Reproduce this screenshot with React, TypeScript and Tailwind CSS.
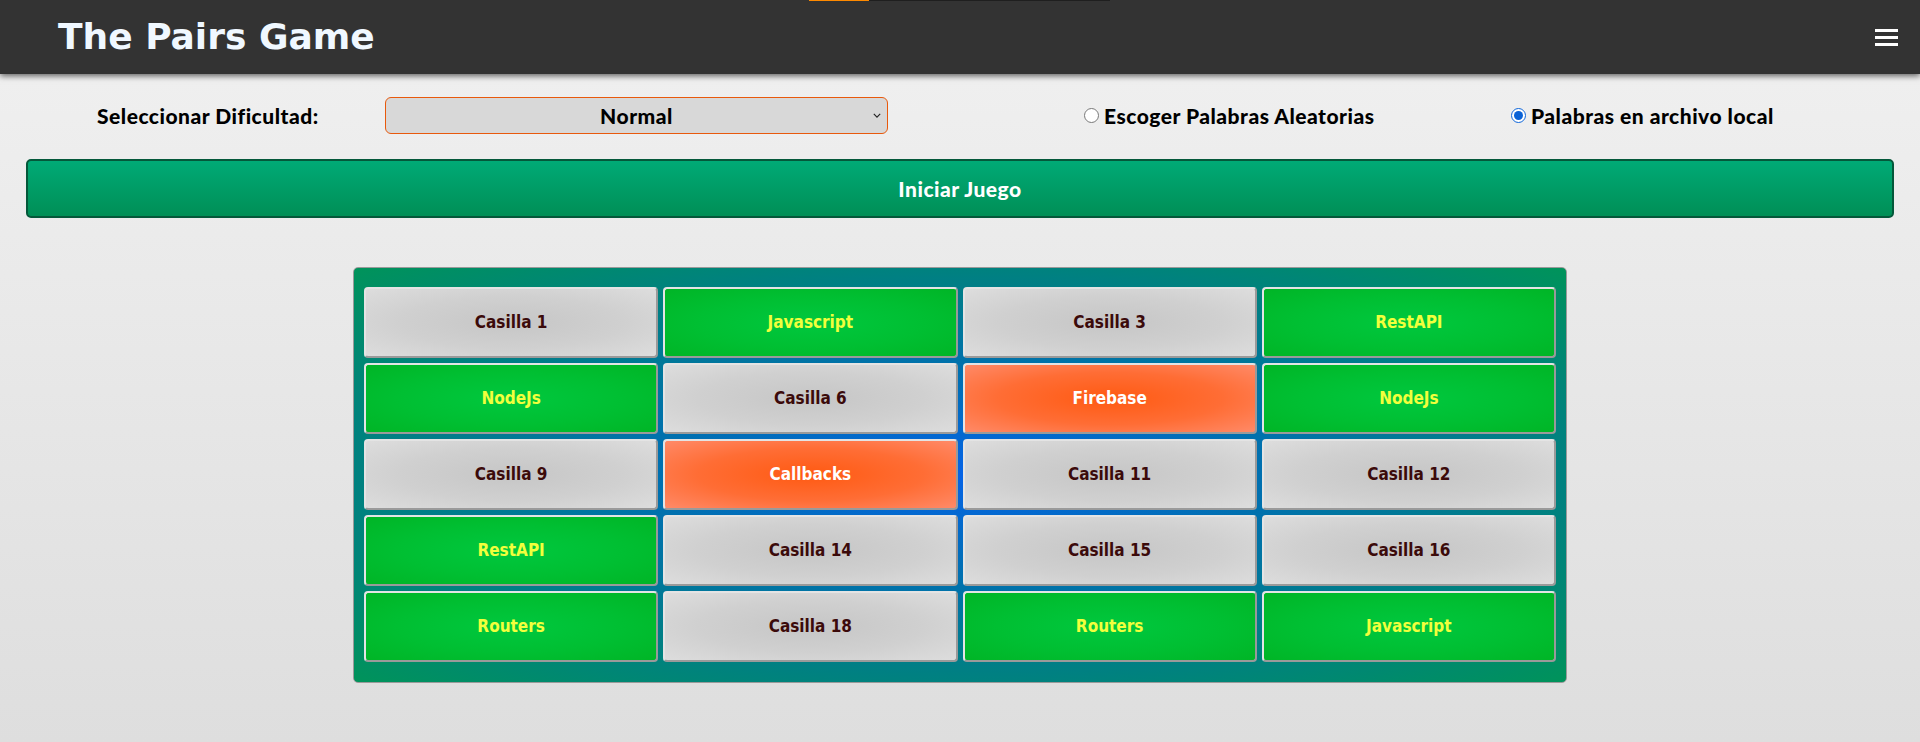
import { useState } from "react";

type Cell = { label: string; state: "hidden" | "match" | "open" };

const cells: Cell[] = [
  { label: "Casilla 1", state: "hidden" },
  { label: "Javascript", state: "match" },
  { label: "Casilla 3", state: "hidden" },
  { label: "RestAPI", state: "match" },
  { label: "NodeJs", state: "match" },
  { label: "Casilla 6", state: "hidden" },
  { label: "Firebase", state: "open" },
  { label: "NodeJs", state: "match" },
  { label: "Casilla 9", state: "hidden" },
  { label: "Callbacks", state: "open" },
  { label: "Casilla 11", state: "hidden" },
  { label: "Casilla 12", state: "hidden" },
  { label: "RestAPI", state: "match" },
  { label: "Casilla 14", state: "hidden" },
  { label: "Casilla 15", state: "hidden" },
  { label: "Casilla 16", state: "hidden" },
  { label: "Routers", state: "match" },
  { label: "Casilla 18", state: "hidden" },
  { label: "Routers", state: "match" },
  { label: "Javascript", state: "match" },
];

const cellStyles = {
  hidden:
    "bg-[radial-gradient(ellipse_at_center,#c6c6c6_0%,#d0d0d0_55%,#dddddd_100%)] text-[#3b0a0a]",
  match:
    "bg-[radial-gradient(ellipse_at_center,#00c83e_0%,#00bf32_55%,#00b526_100%)] text-[#f2ff3c]",
  open:
    "bg-[radial-gradient(ellipse_at_center,#ff5a12_0%,#ff6d35_55%,#ff8a68_100%)] text-white",
};

export default function App() {
  const [random, setRandom] = useState(false);

  return (
    <div className="min-h-[742px] bg-[linear-gradient(to_bottom,#f1f1f1,#dedede)] font-['Lato',sans-serif]">
      <header className="relative z-10 flex h-[74px] items-center justify-between bg-[#333333] pl-[58px] pr-[22px] shadow-[0_2px_6px_rgba(0,0,0,0.6)]">
        <div className="absolute left-[809px] top-0 flex h-px">
          <div className="w-[60px] bg-[#ff8a00]" />
          <div className="w-[241px] bg-[#1f1f1f]" />
        </div>
        <h1 className="font-['DejaVu_Sans',sans-serif] text-[36px] font-bold leading-none text-[#f0f8ff]">
          The Pairs Game
        </h1>
        <button type="button" aria-label="Menu" className="flex w-[23px] flex-col gap-[4px]">
          <span className="h-[3px] bg-white" />
          <span className="h-[3px] bg-white" />
          <span className="h-[3px] bg-white" />
        </button>
      </header>

      <div className="flex h-[60px] items-center pt-[23px] text-[21px] font-black tracking-[0.5px] text-black">
        <label className="ml-[97px] w-[288px]">Seleccionar Dificultad:</label>
        <div className="relative w-[503px]">
          <select
            defaultValue="Normal"
            className="h-[37px] w-full appearance-none rounded-[6px] border border-[#e8590c] bg-[#d8d8d8] text-center font-black text-black"
          >
            <option>Fácil</option>
            <option>Normal</option>
            <option>Difícil</option>
          </select>
          <svg
            viewBox="0 0 10 6"
            className="pointer-events-none absolute right-[7px] top-[16px] h-[5px] w-[8px]"
            fill="none"
            stroke="#222"
            strokeWidth="1.4"
          >
            <path d="M1 1l4 4 4-4" />
          </svg>
        </div>
        <label className="ml-[196px] flex w-[427px] items-center gap-[5px]">
          <input
            type="radio"
            name="src"
            checked={random}
            onChange={() => setRandom(true)}
            className="h-[15px] w-[15px]"
          />
          Escoger Palabras Aleatorias
        </label>
        <label className="flex items-center gap-[5px]">
          <input
            type="radio"
            name="src"
            checked={!random}
            onChange={() => setRandom(false)}
            className="h-[15px] w-[15px] accent-[#0b62d6]"
          />
          Palabras en archivo local
        </label>
      </div>

      <div className="px-[26px] pt-[25px]">
        <button
          type="button"
          className="h-[59px] w-full rounded-[5px] border-2 border-[#04583a] bg-[linear-gradient(to_bottom,#00aa76,#008f56)] text-[21px] font-black tracking-[0.5px] text-white"
        >
          Iniciar Juego
        </button>
      </div>

      <div className="mx-auto mt-[49px] w-[1214px] rounded-[5px] border border-[#9a9a9a] bg-[radial-gradient(ellipse_at_center,#0563e6_0%,#0070b0_35%,#007e86_65%,#00935a_100%)] px-[10px] pb-[20px] pt-[19px]">
        <div className="grid grid-cols-4 gap-[5px]">
          {cells.map((c, i) => (
            <div
              key={i}
              className={`flex h-[71px] items-center justify-center rounded-[4px] border-2 border-t-[#e4e4e4] border-l-[#e4e4e4] border-r-[#9a9a9a] border-b-[#9a9a9a] font-['DejaVu_Sans_Condensed','DejaVu_Sans',sans-serif] text-[17px] font-bold ${cellStyles[c.state]}`}
            >
              {c.label}
            </div>
          ))}
        </div>
      </div>
    </div>
  );
}
